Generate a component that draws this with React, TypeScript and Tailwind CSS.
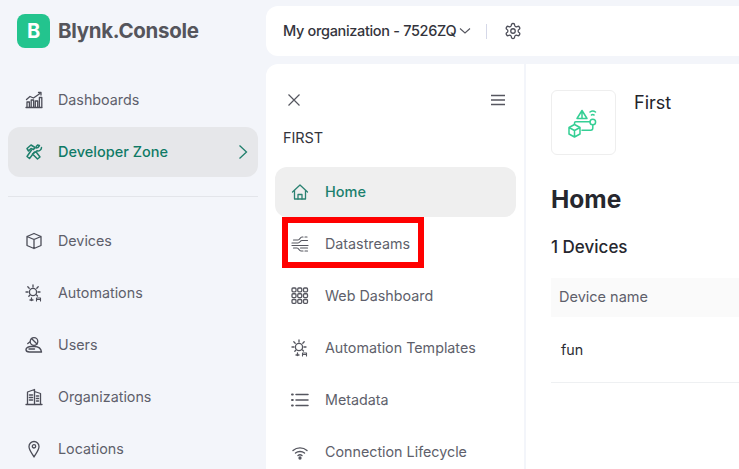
import React from "react";

const stroke = { fill: "none", stroke: "currentColor", strokeWidth: 1.3, strokeLinecap: "round" as const, strokeLinejoin: "round" as const };

function Ico({ children, size = 18 }: { children: React.ReactNode; size?: number }) {
  return (
    <svg width={size} height={size} viewBox="0 0 18 18" {...stroke}>
      {children}
    </svg>
  );
}

const Dash = () => (
  <Ico>
    <path d="M1 16.500h16M2 16v-5h2.400v5M6.200 16V9h2.400v7M10.300 16v-6h2.400v6M14.400 16V6.500h2.400V16" />
    <path d="M1.500 8.500L5 5.500l3.500 1.500L15 2.500" />
    <path d="M13.500 1.500h2.500v2.500" />
  </Ico>
);
const Tools = () => (
  <Ico>
    <path d="M2 5.500L6 2l4 2.500-1.500 2L6 5.500 3.500 8z" strokeWidth="1.500" />
    <path d="M6.500 7L2 13.500 4.500 15.500 9.500 9" strokeWidth="1.500" />
    <path d="M16.500 4.500a3.500 3.500 0 0 1-4.500 3.300L7.500 11l5 5 2.500-2-3.500-4.500M12.500 2a3.500 3.500 0 0 0-1.500 3l2-.5L14.500 2.500z" strokeWidth="1.500" />
  </Ico>
);
const Box = () => (
  <Ico>
    <path d="M9 1.500l7 3v9l-7 3-7-3v-9zM2 4.500l7 3 7-3M9 7.500v9" />
  </Ico>
);
const Sun = () => (
  <Ico>
    <circle cx="8" cy="8" r="3.600" />
    <path d="M8 1v2M2.800 2.800l1.400 1.400M13.200 2.800l-1.400 1.400M1 8h2M13 8h2M3.800 12.200l1-1M11.500 11l1 1" />
    <path d="M5 16h3M6.500 14v2.500" />
    <path d="M11.500 17v-3h4v3M11.500 15.500h4" strokeWidth="1.100" />
  </Ico>
);
const Users = () => (
  <Ico>
    <circle cx="9" cy="5.500" r="3.800" />
    <path d="M6.500 2.500l5.500 5.500M4.800 6l-2 1.500" strokeWidth="1.400" />
    <path d="M6 10.500h3.500c3.500 0 6.500 2 7 5.500H4.500C2.500 16 1 15 1 13.500c0-1.500 2.500-3 5-3zM4 13h5.500" strokeWidth="1.400" />
  </Ico>
);
const Org = () => (
  <Ico>
    <path d="M1 16.500h16M2.500 16V4l7-2.500V16M9.500 3.500l6 2V16" />
    <path d="M4.500 7h3M4.500 9.500h3M4.500 12h3M11.500 8h2M11.500 10.500h2M11.500 13h2" strokeWidth="1.600" />
  </Ico>
);
const Pin = () => (
  <Ico>
    <path d="M9 17c-1-2.500-5-6.500-5-10.500a5 5 0 0 1 10 0C14 10.500 10 14.500 9 17z" />
    <circle cx="9" cy="6.300" r="1.700" />
  </Ico>
);
const Home = () => (
  <Ico>
    <path d="M1.500 9L9 2l7.500 7M3.500 7.500V16h11V7.500" />
    <path d="M7 16v-4.500h4V16" />
  </Ico>
);
const Streams = () => (
  <Ico>
    <path d="M2.500 5h4.500c2 0 2-3 4-3h1M14 2h2M1 8h6c2 0 2-2.500 4-2.500h5.500M1 10.500h16M2.500 13h3.500c2 0 2 3 4 3h2M14 16h2.500M9.500 13h7" strokeWidth="1.200" />
  </Ico>
);
const Grid = () => (
  <Ico>
    {[1, 6.750, 12.500].flatMap((y) =>
      [1, 6.750, 12.500].map((x) => <rect key={`${x}-${y}`} x={x} y={y} width="4" height="3.800" rx="1" />)
    )}
  </Ico>
);
const Meta = () => (
  <Ico>
    <path d="M5 3.500h12M5 9h12M5 14.500h12" strokeWidth="1.500" />
    <path d="M1 3.500h.8M1 9h.8M1 14.500h.8" strokeWidth="2" />
  </Ico>
);
const Wifi = () => (
  <Ico>
    <path d="M2 7.500c4-3.500 10-3.500 14 0M4.500 10c2.500-2 6.500-2 9 0M7 12.500c1-.8 3-.8 4 0" strokeWidth="1.400" />
    <circle cx="9" cy="15" r="1" fill="currentColor" />
  </Ico>
);

const LogoArt = () => (
  <svg width="32" height="30" viewBox="0 0 32 30" fill="none" stroke="#35cf95" strokeWidth="1.500" strokeLinejoin="round" strokeLinecap="round">
    <path d="M9 9.500L14 1.500l5 8zM14 4v5.500" />
    <path d="M22 3c1.500-1.200 4-1.200 5.500 0M23.500 6c.8-.5 1.700-.5 2.500 0" />
    <circle cx="24.800" cy="13" r="2.800" />
    <path d="M24.800 16v3c0 1.500-.7 2.200-2 2.200H14" />
    <path d="M6.500 15v-1c0-.8.5-1.200 1.200-1.200H22" />
    <path d="M6.500 15.500l5.500 3v6.500l-5.500 3-5.500-3v-6.500zM1 18.500l5.500 3 5.500-3M6.500 21.500v6.500" />
  </svg>
);

function SideItem({ icon, label, active }: { icon: React.ReactNode; label: string; active?: boolean }) {
  return (
    <div
      className={`flex h-[50px] shrink-0 items-center rounded-xl pl-[17px] pr-[10px] ${
        active ? "bg-[#e6e7ea] text-[#0f7a66]" : "text-[#5e5f6b]"
      }`}
    >
      <span className={`flex w-[33px] shrink-0 ${active ? "text-[#1f7f6c]" : "text-[#4c4d58]"}`}>{icon}</span>
      <span className={active ? "text-[14.500px] font-medium" : "text-[14.300px]"}>{label}</span>
      {active && (
        <svg className="ml-auto text-[#1f7f6c]" width="10" height="16" viewBox="0 0 10 16" fill="none" stroke="currentColor" strokeWidth="1.300">
          <path d="M1.500 1.500L8.500 8l-7 6.500" />
        </svg>
      )}
    </div>
  );
}

function PanelItem({ icon, label, active }: { icon: React.ReactNode; label: string; active?: boolean }) {
  return (
    <div
      className={`flex h-[50px] shrink-0 items-center rounded-xl pl-4 ${
        active ? "bg-[#efefef] text-[#1b7f6d]" : "text-[#5e5f6b]"
      }`}
    >
      <span className={`flex w-[34px] shrink-0 ${active ? "text-[#2b8272]" : "text-[#55565f]"}`}>{icon}</span>
      <span className={active ? "text-[14.500px] font-medium" : "text-[14.300px]"}>{label}</span>
    </div>
  );
}

export default function App() {
  return (
    <div
      className="relative flex h-[469px] w-[739px] overflow-hidden bg-[#f3f5fa]"
      style={{ fontFamily: "Inter, 'Liberation Sans', sans-serif" }}
    >
      <aside className="flex w-[266px] shrink-0 flex-col px-2">
        <div className="mt-[14px] flex shrink-0 items-center gap-2 pl-[9px]">
          <div className="flex h-[34px] w-[33px] items-center justify-center rounded-lg bg-[#23c48e] text-[20px] font-bold text-white">
            B
          </div>
          <span className="text-[20.500px] font-bold tracking-[-0.3px] text-[#55555c]">Blynk.Console</span>
        </div>
        <nav className="mt-[27px] flex shrink-0 flex-col gap-[2px]">
          <SideItem icon={<Dash />} label="Dashboards" />
          <SideItem icon={<Tools />} label="Developer Zone" active />
        </nav>
        <div className="mt-[19px] mb-[19px] h-px shrink-0 bg-[#e3e5ea]" />
        <nav className="flex shrink-0 flex-col gap-[2px]">
          <SideItem icon={<Box />} label="Devices" />
          <SideItem icon={<Sun />} label="Automations" />
          <SideItem icon={<Users />} label="Users" />
          <SideItem icon={<Org />} label="Organizations" />
          <SideItem icon={<Pin />} label="Locations" />
        </nav>
      </aside>

      <div className="flex min-w-0 flex-1 flex-col pt-[6px]">
        <header className="flex h-[50px] shrink-0 items-center rounded-l-xl bg-white pl-[17px]">
          <span className="text-[14.500px] font-medium tracking-[-0.33px] text-[#33343c]">My organization - 7526ZQ</span>
          <svg className="ml-[3px] text-[#55565f]" width="12" height="8" viewBox="0 0 12 8" fill="none" stroke="currentColor" strokeWidth="1.100">
            <path d="M1 1.500L6 6l5-4.500" />
          </svg>
          <div className="ml-[15px] h-[15px] w-px bg-[#d5d8e8]" />
          <svg className="ml-[17px] text-[#4c4d58]" width="18" height="18" viewBox="0 0 24 24" fill="none" stroke="currentColor" strokeWidth="1.700" strokeLinecap="round" strokeLinejoin="round">
            <path d="M12.220 2h-.44a2 2 0 0 0-2 2v.18a2 2 0 0 1-1 1.730l-.43.25a2 2 0 0 1-2 0l-.15-.08a2 2 0 0 0-2.730.73l-.22.38a2 2 0 0 0 .73 2.730l.15.1a2 2 0 0 1 1 1.720v.51a2 2 0 0 1-1 1.740l-.15.09a2 2 0 0 0-.73 2.730l.22.38a2 2 0 0 0 2.730.73l.15-.08a2 2 0 0 1 2 0l.43.25a2 2 0 0 1 1 1.730V20a2 2 0 0 0 2 2h.44a2 2 0 0 0 2-2v-.18a2 2 0 0 1 1-1.730l.43-.25a2 2 0 0 1 2 0l.15.08a2 2 0 0 0 2.730-.73l.22-.39a2 2 0 0 0-.73-2.730l-.15-.08a2 2 0 0 1-1-1.740v-.5a2 2 0 0 1 1-1.740l.15-.09a2 2 0 0 0 .73-2.730l-.22-.38a2 2 0 0 0-2.730-.73l-.15.08a2 2 0 0 1-2 0l-.43-.25a2 2 0 0 1-1-1.730V4a2 2 0 0 0-2-2z" />
            <circle cx="12" cy="12" r="3" />
          </svg>
        </header>

        <div className="mt-2 flex min-h-0 flex-1">
          <section className="flex w-[258px] shrink-0 flex-col rounded-tl-xl bg-white pl-[9px] pr-2">
            <div className="mt-[27px] flex h-[18px] shrink-0 items-center justify-between pl-[12px] pr-[11px] text-[#55565f]">
              <svg width="14" height="14" viewBox="0 0 14 14" fill="none" stroke="currentColor" strokeWidth="1.200">
                <path d="M1.500 1.500l11 11M12.500 1.500l-11 11" />
              </svg>
              <svg width="14" height="12" viewBox="0 0 14 12" fill="none" stroke="currentColor" strokeWidth="1.400">
                <path d="M0 1.500h14M0 6h14M0 10.500h14" />
              </svg>
            </div>
            <div className="mt-[19px] shrink-0 pl-2 text-[14.500px] leading-[20px] tracking-[-0.1px] text-[#33343c]">FIRST</div>
            <div className="mt-[19px] flex shrink-0 flex-col gap-[2px]">
              <PanelItem icon={<Home />} label="Home" active />
              <PanelItem icon={<Streams />} label="Datastreams" />
              <PanelItem icon={<Grid />} label="Web Dashboard" />
              <PanelItem icon={<Sun />} label="Automation Templates" />
              <PanelItem icon={<Meta />} label="Metadata" />
              <PanelItem icon={<Wifi />} label="Connection Lifecycle" />
            </div>
          </section>

          <main className="ml-[2px] min-w-0 flex-1 bg-white pl-[25px]">
            <div className="mt-[26px] flex items-start">
              <div className="flex h-[65px] w-[65px] items-center justify-center rounded-md border border-[#eeeeee] pt-[2px]">
                <LogoArt />
              </div>
              <div className="ml-[18px] text-[18px] leading-[26px] text-[#22232b]">First</div>
            </div>
            <h1 className="mt-[28px] text-[24.500px] leading-[32px] font-bold text-[#26272e]">Home</h1>
            <div className="mt-[21px] text-[17px] leading-[22px] font-medium text-[#26272e]">1 Devices</div>
            <div className="mt-[20px] flex h-[39px] items-center bg-[#fafafa] pb-[1px] pl-2 text-[14.500px] text-[#5e5f6b]">Device name</div>
            <div className="flex h-[66px] items-center border-b border-[#eef0f2] pl-[10px] pt-[1px] text-[14.300px] text-[#2a2b33]">fun</div>
          </main>
        </div>
      </div>

      <div className="absolute left-[282px] top-[217px] h-[51px] w-[142px] border-[6px] border-[#ff0000]" />
    </div>
  );
}
